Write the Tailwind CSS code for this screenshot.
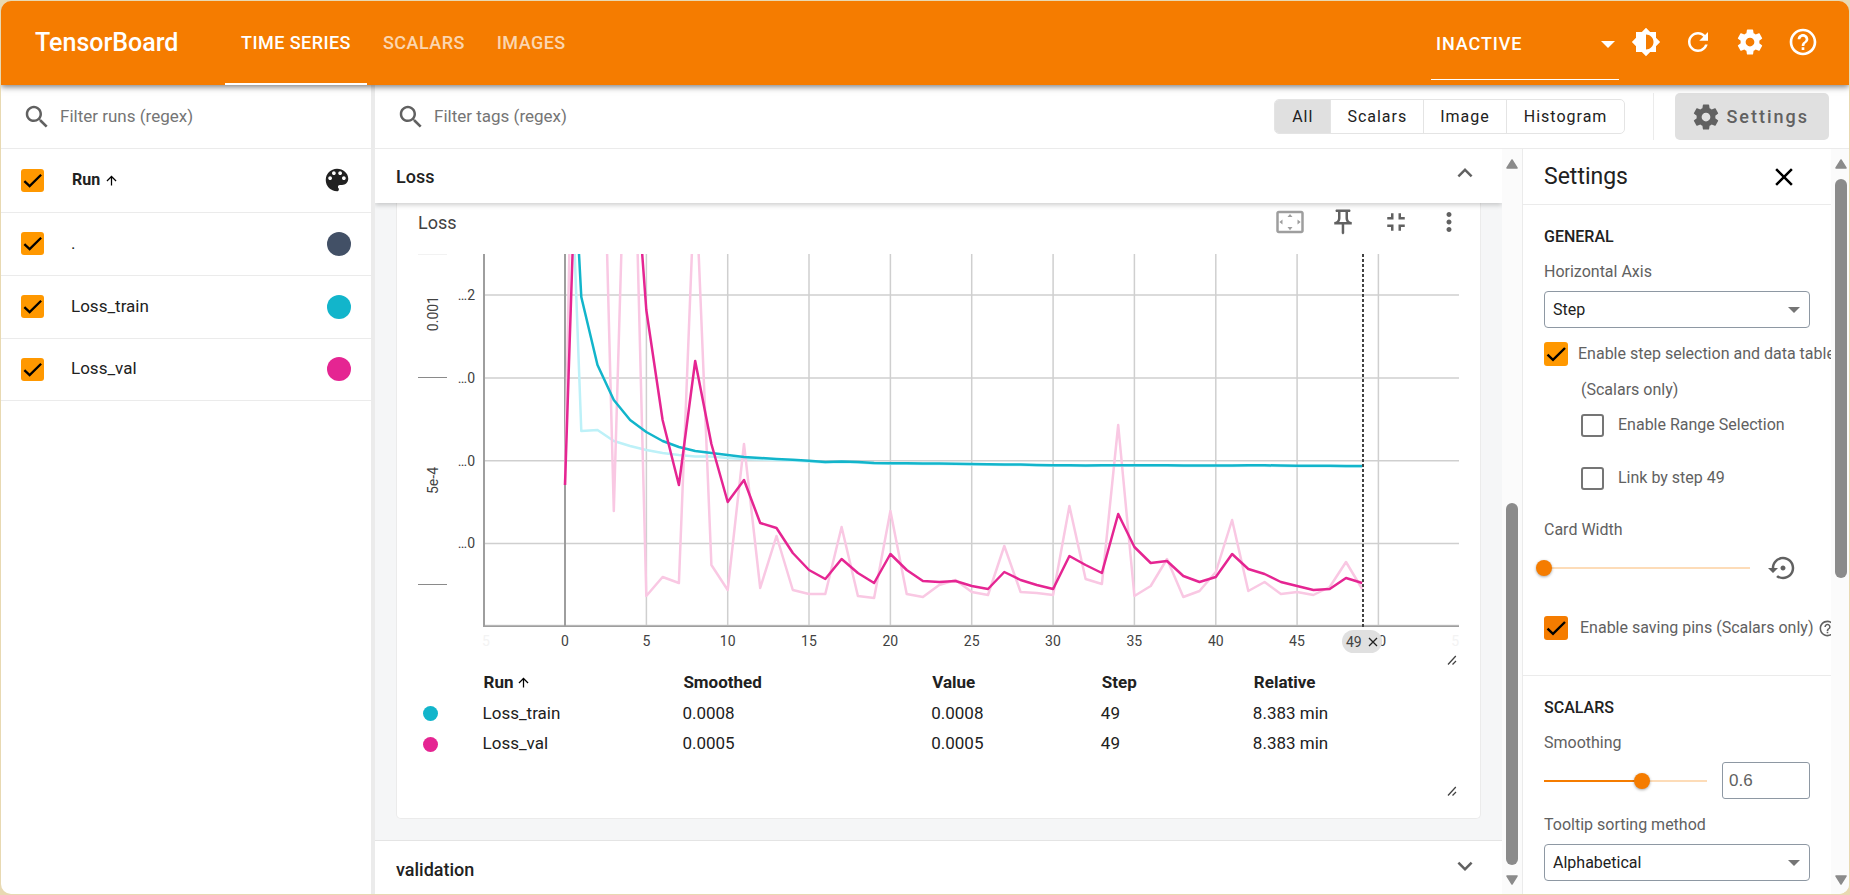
<!DOCTYPE html>
<html lang="en">
<head>
<meta charset="utf-8">
<title>TensorBoard</title>
<script src="https://cdn.jsdelivr.net/npm/@tailwindcss/browser@4"></script>
</head>
<body class="bg-[#e8d9b2] font-[Roboto,sans-serif] text-[#212121]">

<svg class="hidden" aria-hidden="true">
  <symbol id="search" viewBox="0 0 24 24"><path d="M15.5 14h-.79l-.28-.27C15.41 12.59 16 11.11 16 9.5 16 5.91 13.09 3 9.5 3S3 5.91 3 9.5 5.91 16 9.5 16c1.61 0 3.09-.59 4.23-1.57l.27.28v.79l5 4.99L20.49 19l-4.99-5zm-6 0C7.01 14 5 11.99 5 9.5S7.01 5 9.5 5 14 7.01 14 9.5 11.99 14 9.5 14z"/></symbol>
  <symbol id="gear" viewBox="0 0 24 24"><path d="M19.43 12.98c.04-.32.07-.64.07-.98s-.03-.66-.07-.98l2.11-1.65c.19-.15.24-.42.12-.64l-2-3.46c-.12-.22-.39-.3-.61-.22l-2.49 1c-.52-.4-1.08-.73-1.69-.98l-.38-2.65C14.46 2.18 14.25 2 14 2h-4c-.25 0-.46.18-.49.42l-.38 2.65c-.61.25-1.17.59-1.69.98l-2.49-1c-.23-.09-.49 0-.61.22l-2 3.46c-.13.22-.07.49.12.64l2.11 1.65c-.04.32-.07.65-.07.98s.03.66.07.98l-2.11 1.65c-.19.15-.24.42-.12.64l2 3.46c.12.22.39.3.61.22l2.49-1c.52.4 1.08.73 1.69.98l.38 2.65c.03.24.24.42.49.42h4c.25 0 .46-.18.49-.42l.38-2.65c.61-.25 1.17-.59 1.69-.98l2.49 1c.23.09.49 0 .61-.22l2-3.46c.12-.22.07-.49-.12-.64l-2.11-1.65zM12 15.5c-1.93 0-3.5-1.57-3.5-3.5s1.57-3.5 3.5-3.5 3.5 1.57 3.5 3.5-1.57 3.5-3.5 3.5z"/></symbol>
  <symbol id="help" viewBox="0 0 24 24"><path d="M11 18h2v-2h-2v2zm1-16C6.48 2 2 6.48 2 12s4.48 10 10 10 10-4.48 10-10S17.52 2 12 2zm0 18c-4.41 0-8-3.59-8-8s3.59-8 8-8 8 3.59 8 8-3.59 8-8 8zm0-14c-2.21 0-4 1.79-4 4h2c0-1.1.9-2 2-2s2 .9 2 2c0 2-3 1.75-3 5h2c0-2.25 3-2.5 3-5 0-2.21-1.79-4-4-4z"/></symbol>
  <symbol id="check" viewBox="0 0 24 24"><path d="M3.5 12.7 9 17.9 21 6" fill="none" stroke="#000" stroke-width="2.4"/></symbol>
  <symbol id="arrow-up" viewBox="0 0 24 24"><path d="M4 12l1.41 1.41L11 7.83V20h2V7.83l5.58 5.59L20 12l-8-8-8 8z"/></symbol>
  <symbol id="resize" viewBox="0 0 10 10"><path d="M1 9.500 8.800 1M5.500 9.500 9 6" fill="none" stroke="#424242" stroke-width="1.300"/></symbol>
</svg>

<div class="flex h-screen flex-col p-px">
<div class="flex min-h-0 flex-1 flex-col overflow-hidden rounded-[10px] bg-white">

  <header class="relative z-20 flex h-[84px] shrink-0 items-center bg-[#f57c00] text-white shadow-[0_2px_6px_rgba(0,0,0,0.5)]">
    <h1 class="w-[224px] pl-[34px] text-[25px] leading-8 font-medium">TensorBoard</h1>
    <nav class="flex h-full text-[18px] font-medium tracking-wide">
      <a href="#" class="flex items-center border-b-2 border-white px-4">TIME SERIES</a>
      <a href="#" class="flex items-center border-b-2 border-transparent px-4 text-white/70">SCALARS</a>
      <a href="#" class="flex items-center border-b-2 border-transparent px-4 text-white/70">IMAGES</a>
    </nav>
    <div class="ml-auto flex h-full items-center pr-[30px]">
      <div class="relative mr-3 h-[79px] w-[188px] self-start border-b border-white">
        <select aria-label="Inactive dashboards" class="h-full w-full appearance-none pt-[7px] pl-[5px] text-[18px] font-medium tracking-wider text-white outline-none"><option>INACTIVE</option></select>
        <svg class="pointer-events-none absolute top-[40px] right-1 h-[7px] w-[14px] fill-white" viewBox="0 0 14 7"><path d="M0 0h14L7 7z"/></svg>
      </div>
      <div class="flex gap-[22px] pb-[3px]">
        <button aria-label="Toggle dark mode"><svg class="size-[30px] fill-white" viewBox="0 0 24 24"><path d="M20 15.310L23.310 12 20 8.690V4h-4.690L12 .69 8.690 4H4v4.690L.69 12 4 15.310V20h4.690L12 23.310 15.310 20H20v-4.690zM12 18V6c3.310 0 6 2.690 6 6s-2.690 6-6 6z"/></svg></button>
        <button aria-label="Reload"><svg class="size-[30px] fill-white" viewBox="0 0 24 24"><path d="M17.65 6.35C16.2 4.9 14.21 4 12 4c-4.42 0-7.99 3.58-7.99 8s3.57 8 7.99 8c3.73 0 6.84-2.55 7.73-6h-2.08c-.82 2.33-3.04 4-5.65 4-3.31 0-6-2.69-6-6s2.69-6 6-6c1.66 0 3.14.69 4.22 1.78L13 11h7V4l-2.35 2.35z"/></svg></button>
        <button aria-label="Open settings"><svg class="size-[30px] fill-white"><use href="#gear"/></svg></button>
        <a href="#" aria-label="Help"><svg class="mt-px size-[32px] fill-white"><use href="#help"/></svg></a>
      </div>
    </div>
  </header>

  <div class="flex min-h-0 flex-1">

    <!-- Runs -->
    <aside class="flex w-[374px] shrink-0 flex-col border-r-4 border-[#ebebeb]">
      <label class="flex h-16 items-center gap-2 border-b border-[#ebebeb] pl-[21px]">
        <svg class="size-[30px] shrink-0 fill-[#616161]"><use href="#search"/></svg>
        <input type="text" placeholder="Filter runs (regex)" aria-label="Filter runs" class="w-full text-[17px] outline-none placeholder:text-[#757575]">
      </label>
      <table class="w-full text-left text-[17px]">
        <thead>
          <tr class="h-[63px] border-b border-[#ebebeb]">
            <th class="w-[70px] pl-5"><span class="relative block size-[23px]"><input type="checkbox" checked aria-label="Select all runs" class="block size-full appearance-none rounded-[3px] bg-[#ff9800]"><svg class="pointer-events-none absolute inset-0 size-full"><use href="#check"/></svg></span></th>
            <th class="text-[16px] font-bold"><span class="flex items-center gap-1 pl-px">Run <svg class="size-[15px]"><use href="#arrow-up"/></svg></span></th>
            <th class="w-[49px]"><button aria-label="Color runs by" class="block"><svg class="size-[30px] fill-[#212121]" viewBox="0 0 24 24"><path d="M12 3c-4.970 0-9 4.030-9 9s4.030 9 9 9c.83 0 1.500-.67 1.500-1.500 0-.39-.15-.74-.39-1.010-.23-.26-.38-.61-.38-.99 0-.83.67-1.500 1.500-1.500H16c2.760 0 5-2.240 5-5 0-4.420-4.030-8-9-8zm-5.500 9c-.83 0-1.500-.67-1.500-1.500S5.670 9 6.500 9 8 9.670 8 10.500 7.330 12 6.500 12zm3-4C8.670 8 8 7.330 8 6.500S8.670 5 9.500 5s1.500.67 1.500 1.500S10.330 8 9.500 8zm5 0c-.83 0-1.500-.67-1.500-1.500S13.670 5 14.500 5s1.500.67 1.500 1.500S15.330 8 14.500 8zm3 4c-.83 0-1.500-.67-1.500-1.500S16.670 9 17.500 9s1.500.67 1.500 1.500-.67 1.500-1.500 1.500z"/></svg></button></th>
          </tr>
        </thead>
        <tbody>
          <tr class="h-[63px] border-b border-[#ebebeb]">
            <td class="pl-5"><span class="relative block size-[23px]"><input type="checkbox" checked aria-label="." class="block size-full appearance-none rounded-[3px] bg-[#ff9800]"><svg class="pointer-events-none absolute inset-0 size-full"><use href="#check"/></svg></span></td>
            <td>.</td>
            <td class="pl-[5px]"><button aria-label="Change color of ." class="block size-6 rounded-full bg-[#425066]"></button></td>
          </tr>
          <tr class="h-[63px] border-b border-[#ebebeb]">
            <td class="pl-5"><span class="relative block size-[23px]"><input type="checkbox" checked aria-label="Loss_train" class="block size-full appearance-none rounded-[3px] bg-[#ff9800]"><svg class="pointer-events-none absolute inset-0 size-full"><use href="#check"/></svg></span></td>
            <td>Loss_train</td>
            <td class="pl-[5px]"><button aria-label="Change color of Loss_train" class="block size-6 rounded-full bg-[#12b5cb]"></button></td>
          </tr>
          <tr class="h-[62px] border-b border-[#ebebeb]">
            <td class="pl-5"><span class="relative block size-[23px]"><input type="checkbox" checked aria-label="Loss_val" class="block size-full appearance-none rounded-[3px] bg-[#ff9800]"><svg class="pointer-events-none absolute inset-0 size-full"><use href="#check"/></svg></span></td>
            <td>Loss_val</td>
            <td class="pl-[5px]"><button aria-label="Change color of Loss_val" class="block size-6 rounded-full bg-[#e52592]"></button></td>
          </tr>
        </tbody>
      </table>
    </aside>

    <div class="flex min-w-0 flex-1 flex-col">
      <!-- Toolbar -->
      <div class="flex h-16 shrink-0 items-center border-b border-[#ebebeb] pr-5">
        <label class="flex flex-1 items-center gap-2 pl-[21px]">
          <svg class="size-[30px] shrink-0 fill-[#616161]"><use href="#search"/></svg>
          <input type="text" placeholder="Filter tags (regex)" aria-label="Filter tags" class="w-full text-[17px] outline-none placeholder:text-[#757575]">
        </label>
        <div class="flex h-[35px] overflow-hidden rounded-[5px] border border-[#e4e4e4] text-[16px] tracking-[1px] text-[#212121]">
          <button class="bg-[#e0e0e0] px-[17px]">All</button>
          <button class="border-l border-[#e4e4e4] px-4">Scalars</button>
          <button class="border-l border-[#e4e4e4] px-4">Image</button>
          <button class="border-l border-[#e4e4e4] px-[17px]">Histogram</button>
        </div>
        <div class="ml-7 h-[47px] w-px bg-[#ebebeb]"></div>
        <button class="ml-[21px] flex h-[47px] items-center gap-[5px] rounded-[5px] bg-[#e0e0e0] pr-5 pl-4 text-[18px] font-medium tracking-[2px] text-[#616161]"><svg class="size-[30px] fill-[#616161]"><use href="#gear"/></svg>Settings</button>
      </div>

      <div class="flex min-h-0 flex-1">
        <!-- Cards -->
        <main class="flex min-w-0 flex-1 flex-col overflow-hidden bg-[#f5f6f7]">
          <div class="relative z-10 flex h-[54px] shrink-0 items-center justify-between bg-white pr-[22px] pl-[21px] shadow-[0_2px_5px_rgba(0,0,0,0.2)]">
            <h2 class="text-[18px] font-medium">Loss</h2>
            <button aria-label="Collapse Loss" class="pb-[7px]"><svg class="size-[30px] fill-[#616161]" viewBox="0 0 24 24"><path d="M12 8l-6 6 1.410 1.410L12 10.830l4.590 4.580L18 14z"/></svg></button>
          </div>

          <section class="mx-[21px] shrink-0 rounded-b-[5px] border border-t-0 border-[#ebebeb] bg-white px-[21px] pb-[22px]">
            <div class="flex h-[38px] items-center">
              <h3 class="flex-1 text-[18px] text-[#424242]">Loss</h3>
              <div class="-mr-[5px] flex gap-[23px]">
                <button aria-label="Fit domain to data"><svg class="size-[30px] fill-[#9e9e9e]" viewBox="0 0 24 24"><path d="M12.010 5.500L10 8h4l-1.990-2.500zM18 10v4l2.500-1.990L18 10zM6 10l-2.500 2.010L6 14v-4zm8 6h-4l2.010 2.500L14 16zm7-13H3c-1.100 0-2 .9-2 2v14c0 1.100.9 2 2 2h18c1.100 0 2-.9 2-2V5c0-1.100-.9-2-2-2zm0 16.010H3V4.990h18v14.020z"/></svg></button>
                <button aria-label="Pin card"><svg class="size-[30px] fill-[#616161]" viewBox="0 0 24 24"><path d="M14 4v5c0 1.120.37 2.160 1 3H9c.65-.86 1-1.900 1-3V4h4m3-2H7c-.55 0-1 .45-1 1s.45 1 1 1h1v5c0 1.660-1.340 3-3 3v2h5.970v7l1 1 1-1v-7H19v-2c-1.660 0-3-1.340-3-3V4h1c.55 0 1-.45 1-1s-.45-1-1-1z"/></svg></button>
                <button aria-label="Toggle full size"><svg class="size-[30px] fill-[#616161]" viewBox="0 0 24 24"><path d="M5 16h3v3h2v-5H5v2zm3-8H5v2h5V5H8v3zm6 11h2v-3h3v-2h-5v5zm2-11V5h-2v5h5V8h-3z"/></svg></button>
                <button aria-label="More options"><svg class="size-[30px] fill-[#616161]" viewBox="0 0 24 24"><path d="M12 8c1.100 0 2-.9 2-2s-.9-2-2-2-2 .9-2 2 .9 2 2 2zm0 2c-1.100 0-2 .9-2 2s.9 2 2 2 2-.9 2-2-.9-2-2-2zm0 6c-1.100 0-2 .9-2 2s.9 2 2 2 2-.9 2-2-.9-2-2-2z"/></svg></button>
              </div>
            </div>

            <!-- Chart: y axis, plot, x axis -->
            <div class="mt-[13px] flex h-[373px] text-[14px] text-[#424242]">
              <div class="flex w-[29px] flex-col">
                <div class="flex h-[124px] items-center justify-center border-y border-t-[#f2f2f2] border-b-[#8a8a8a]"><span class="rotate-180 pt-1 pr-[2px] [writing-mode:vertical-rl]">0.001</span></div>
                <div class="flex h-[207px] items-center justify-center border-b border-[#8a8a8a]"><span class="rotate-180 pr-[2px] [writing-mode:vertical-rl]">5e-4</span></div>
              </div>
              <div class="relative w-[36px]">
                <span class="absolute right-2 -translate-y-1/2" style="top:11.0%">…2</span>
                <span class="absolute right-2 -translate-y-1/2" style="top:33.2%">…0</span>
                <span class="absolute right-2 -translate-y-1/2" style="top:55.4%">…0</span>
                <span class="absolute right-2 -translate-y-1/2" style="top:77.6%">…0</span>
              </div>
              <svg class="h-full min-w-0 flex-1" viewBox="0 0 976 373" preserveAspectRatio="none" role="img" aria-label="Loss by step">
                <g id="grid" stroke="#cfcfcf" stroke-width="1.500" fill="none">
                  <path vector-effect="non-scaling-stroke" d="M0 41H976M0 124H976M0 206.700H976M0 289.400H976M0 371.500H976"/>
                  <path vector-effect="non-scaling-stroke" d="M163.400 0V373M244.700 0V373M326 0V373M407.400 0V373M488.700 0V373M570.100 0V373M651.400 0V373M732.800 0V373M814.100 0V373M895.400 0V373"/>
                  <path vector-effect="non-scaling-stroke" stroke="#9e9e9e" stroke-width="2" d="M82 0V373M1 0V373M0 372.500H976"/>
                </g>
                <g fill="none" stroke-width="2.500" stroke-linejoin="round">
                  <polyline id="train-raw" vector-effect="non-scaling-stroke" stroke="#bdf1f8"/>
                  <polyline id="val-raw" vector-effect="non-scaling-stroke" stroke="#f9c8e3"/>
                  <polyline id="train" vector-effect="non-scaling-stroke" stroke="#12b5cb"/>
                  <polyline id="val" vector-effect="non-scaling-stroke" stroke="#e52592"/>
                </g>
                <path vector-effect="non-scaling-stroke" d="M880 0V373" stroke="#424242" stroke-width="2" stroke-dasharray="3 2"/>
              </svg>
            </div>
            <div class="relative ml-[65px] h-[28px] text-[14px] leading-[28px] text-[#424242]">
              <span class="absolute -translate-x-1/2 text-[#f3f3f3]" style="left:0.3%">5</span>
              <span class="absolute -translate-x-1/2" style="left:8.4%">0</span>
              <span class="absolute -translate-x-1/2" style="left:16.74%">5</span>
              <span class="absolute -translate-x-1/2" style="left:25.07%">10</span>
              <span class="absolute -translate-x-1/2" style="left:33.4%">15</span>
              <span class="absolute -translate-x-1/2" style="left:41.74%">20</span>
              <span class="absolute -translate-x-1/2" style="left:50.07%">25</span>
              <span class="absolute -translate-x-1/2" style="left:58.4%">30</span>
              <span class="absolute -translate-x-1/2" style="left:66.74%">35</span>
              <span class="absolute -translate-x-1/2" style="left:75.08%">40</span>
              <span class="absolute -translate-x-1/2" style="left:83.4%">45</span>
              <span class="absolute -translate-x-1/2" style="left:91.74%">50</span>
              <span class="absolute -translate-x-1/2 text-[#f3f3f3]" style="left:99.6%">5</span>
              <span class="absolute top-[3px] flex h-[23px] w-10 -translate-x-1/2 items-center justify-center gap-[6px] rounded-full bg-[#e0e0e0]" style="left:90.05%">49<button aria-label="Remove step"><svg class="block size-[10px]" viewBox="0 0 10 10"><path d="M1 1l8 8M9 1L1 9" stroke="#212121" stroke-width="1.300"/></svg></button></span>
            </div>
            <div class="flex h-[12px] justify-end pr-[2px]"><svg class="size-[10px]"><use href="#resize"/></svg></div>

            <table class="w-full table-fixed text-left text-[17px]">
              <colgroup><col style="width:6.2%"><col style="width:19.2%"><col style="width:23.9%"><col style="width:16.3%"><col style="width:14.6%"><col></colgroup>
              <thead>
                <tr class="h-[31px]">
                  <td></td>
                  <th class="pl-px font-bold"><span class="flex items-center gap-[3px]">Run <svg class="size-[15px]"><use href="#arrow-up"/></svg></span></th>
                  <th class="pl-px font-bold">Smoothed</th><th class="pl-px font-bold">Value</th><th class="pl-px font-bold">Step</th><th class="pl-px font-bold">Relative</th>
                </tr>
              </thead>
              <tbody>
                <tr class="h-[31px]"><td class="pl-[5px]"><span class="block size-[15px] rounded-full bg-[#12b5cb]"></span></td><td>Loss_train</td><td>0.0008</td><td>0.0008</td><td>49</td><td>8.383 min</td></tr>
                <tr class="h-[30px]"><td class="pl-[5px]"><span class="block size-[15px] rounded-full bg-[#e52592]"></span></td><td>Loss_val</td><td>0.0005</td><td>0.0005</td><td>49</td><td>8.383 min</td></tr>
              </tbody>
            </table>
            <div class="flex h-[37px] items-end justify-end pr-[2px]"><svg class="size-[10px]"><use href="#resize"/></svg></div>
          </section>

          <div class="mt-[21px] flex flex-1 items-center justify-between border-t border-[#e4e4e4] bg-white pt-1 pr-[22px] pl-[21px]">
            <h2 class="text-[18px] font-medium">validation</h2>
            <button aria-label="Expand validation" class="pb-[7px]"><svg class="size-[30px] fill-[#616161]" viewBox="0 0 24 24"><path d="M16.590 8.590L12 13.170 7.410 8.590 6 10l6 6 6-6z"/></svg></button>
          </div>
        </main>

        <div class="flex w-5 shrink-0 flex-col items-center bg-[#fbfbfb] pt-[10px] pb-[9px]" aria-hidden="true">
          <svg class="h-[10px] w-3" viewBox="0 0 12 10"><path d="M6 1 11 9H1z" fill="#8b8b8b" stroke="#8b8b8b" stroke-width="1.500" stroke-linejoin="round"/></svg>
          <div class="basis-[334px]"></div>
          <div class="w-3 flex-1 rounded-full bg-[#8b8b8b]"></div>
          <svg class="mt-[10px] h-[10px] w-3" viewBox="0 0 12 10"><path d="M6 9 11 1H1z" fill="#8b8b8b" stroke="#8b8b8b" stroke-width="1.500" stroke-linejoin="round"/></svg>
        </div>

        <!-- Settings -->
        <aside class="flex w-[327px] shrink-0 border-l border-[#ebebeb]">
          <div class="min-w-0 flex-1 overflow-hidden text-[16px] leading-5 whitespace-nowrap text-[#616161]">
            <div class="flex h-14 items-center justify-between border-b border-[#ebebeb] pr-8 pl-[21px] text-[#212121]">
              <h2 class="text-[23px] leading-7">Settings</h2>
              <button aria-label="Close settings"><svg class="size-[30px]" viewBox="0 0 24 24"><path d="M19 6.410L17.590 5 12 10.590 6.410 5 5 6.410 10.590 12 5 17.590 6.410 19 12 13.410 17.590 19 19 17.590 13.410 12z"/></svg></button>
            </div>

            <section class="border-b border-[#ebebeb] px-[21px] pt-[22px] pb-[35px]">
              <h3 class="font-medium text-[#212121]">GENERAL</h3>
              <label for="axis" class="mt-[15px] block">Horizontal Axis</label>
              <div class="relative mt-[9px]">
                <select id="axis" class="h-[37px] w-full appearance-none rounded-[4px] border border-[#8e98a3] pl-2 text-[16px] text-[#212121]"><option>Step</option><option>Relative</option><option>Wall</option></select>
                <svg class="pointer-events-none absolute top-4 right-[10px] h-[6px] w-3 fill-[#757575]" viewBox="0 0 12 6"><path d="M0 0h12L6 6z"/></svg>
              </div>
              <div class="mt-[14px] flex h-6 items-center gap-[10px]">
                <span class="relative block size-6 shrink-0"><input id="stepsel" type="checkbox" checked class="block size-full appearance-none rounded-[3px] bg-[#ff9800]"><svg class="pointer-events-none absolute inset-0 size-full"><use href="#check"/></svg></span>
                <label for="stepsel">Enable step selection and data table</label>
              </div>
              <p class="mt-[14px] pl-[37px]">(Scalars only)</p>
              <div class="mt-[13px] flex h-6 items-center gap-[14px] pl-[37px]">
                <input id="range" type="checkbox" class="size-[23px] appearance-none rounded-[3px] border-2 border-[#757575]"><label for="range">Enable Range Selection</label>
              </div>
              <div class="mt-[29px] flex h-6 items-center gap-[14px] pl-[37px]">
                <input id="link" type="checkbox" class="size-[23px] appearance-none rounded-[3px] border-2 border-[#757575]"><label for="link">Link by step 49</label>
              </div>
              <label for="cardwidth" class="mt-[30px] block">Card Width</label>
              <div class="mt-[13px] flex h-[30px] items-center">
                <input id="cardwidth" type="range" min="0" max="100" value="0" class="-ml-2 h-4 min-w-0 flex-1 appearance-none bg-[linear-gradient(#fddcb8,#fddcb8)] bg-[length:calc(100%-16px)_2px] bg-center bg-no-repeat [&::-webkit-slider-thumb]:size-4 [&::-webkit-slider-thumb]:appearance-none [&::-webkit-slider-thumb]:rounded-full [&::-webkit-slider-thumb]:bg-[#f57c00] [&::-webkit-slider-thumb]:shadow-[0_1px_3px_rgba(0,0,0,0.35)]">
                <button aria-label="Reset card width" class="mr-3 ml-[10px]"><svg class="size-[30px] fill-[#616161]" viewBox="0 0 24 24"><path d="M14 12c0-1.100-.9-2-2-2s-2 .9-2 2 .9 2 2 2 2-.9 2-2zm-2-9c-4.970 0-9 4.030-9 9H0l4 4 4-4H5c0-3.870 3.130-7 7-7s7 3.130 7 7-3.130 7-7 7c-1.510 0-2.910-.49-4.060-1.300l-1.420 1.440C8.040 20.300 9.940 21 12 21c4.970 0 9-4.030 9-9s-4.030-9-9-9z"/></svg></button>
              </div>
              <div class="mt-[33px] flex h-6 items-center gap-3">
                <span class="relative block size-6 shrink-0"><input id="pins" type="checkbox" checked class="block size-full appearance-none rounded-[3px] bg-[#f57c00]"><svg class="pointer-events-none absolute inset-0 size-full"><use href="#check"/></svg></span>
                <label for="pins">Enable saving pins (Scalars only)</label>
                <svg class="-ml-[7px] size-[19px] shrink-0 fill-[#616161]"><use href="#help"/></svg>
              </div>
            </section>

            <section class="px-[21px] pt-[22px]">
              <h3 class="font-medium text-[#212121]">SCALARS</h3>
              <label for="smooth" class="mt-[15px] block">Smoothing</label>
              <div class="mt-[9px] flex h-[37px] items-center">
                <input id="smooth" type="range" min="0" max="1" step="0.1" value="0.6" class="-ml-2 h-4 min-w-0 flex-1 appearance-none bg-[linear-gradient(to_right,#f57c00_60%,#fddcb8_60%)] bg-[length:calc(100%-16px)_2px] bg-center bg-no-repeat [&::-webkit-slider-thumb]:size-4 [&::-webkit-slider-thumb]:appearance-none [&::-webkit-slider-thumb]:rounded-full [&::-webkit-slider-thumb]:bg-[#f57c00] [&::-webkit-slider-thumb]:shadow-[0_1px_3px_rgba(0,0,0,0.35)]">
                <input type="text" value="0.6" aria-label="Smoothing value" class="ml-[7px] h-[37px] w-[88px] rounded-[3px] border border-[#8e98a3] pl-[6px] font-['Liberation_Sans',sans-serif] text-[17px] text-[#616161]">
              </div>
              <label for="tooltip" class="mt-4 block">Tooltip sorting method</label>
              <div class="relative mt-[9px]">
                <select id="tooltip" class="h-[37px] w-full appearance-none rounded-[4px] border border-[#8e98a3] pl-2 text-[16px] text-[#212121]"><option>Alphabetical</option><option>Ascending</option><option>Descending</option></select>
                <svg class="pointer-events-none absolute top-4 right-[10px] h-[6px] w-3 fill-[#757575]" viewBox="0 0 12 6"><path d="M0 0h12L6 6z"/></svg>
              </div>
            </section>
          </div>
          <div class="flex w-[18px] shrink-0 flex-col items-center bg-[#fbfbfb] pt-[10px] pb-[9px] pl-[2px]" aria-hidden="true">
            <svg class="h-[10px] w-3" viewBox="0 0 12 10"><path d="M6 1 11 9H1z" fill="#8b8b8b" stroke="#8b8b8b" stroke-width="1.500" stroke-linejoin="round"/></svg>
            <div class="mt-[10px] w-3 basis-[399px] rounded-full bg-[#8b8b8b]"></div>
            <svg class="mt-auto h-[10px] w-3" viewBox="0 0 12 10"><path d="M6 9 11 1H1z" fill="#8b8b8b" stroke="#8b8b8b" stroke-width="1.500" stroke-linejoin="round"/></svg>
          </div>
        </aside>
      </div>
    </div>
  </div>
</div>
</div>

<script>
  // Vertical plot positions, one entry per training step.
  const trainTail = [208,207.5,208,209,209.300,209.300,209.500,209.500,209.700,210,210.200,210.400,210.600,211,211.200,211.200,211.400,211.200,211.200,211.200,211.200,211.200,211.400,211.400,211.400,211.400,211.200,211.300,211.500,211.700,211.800,211.700,212,212];
  const series = {
    'train-raw': [-261,177,176,187,192,196,199,201,202.500,202.500,204,205,205.500,206,206.600,207.500,...trainTail.map(v => v + .5)],
    'train': [-261,43,111,146,166,178,187,193,197,199,201,203,204,205,205.700,206.700,...trainTail],
    'val-raw': [231,-643,-370,257,-300,342,323,329,-85,311,336,190,334,282,336,340,340,273,342,344,257,340,343,331,326,338,341,292,338,339,341,252,325,330,171,342,332,305,343,337,318,266,337,328,340,338,341,333,308,335],
    'val': [231,-268,-450,-450,-165,56,166,231,107,190,248,226,269,274,299,316,325,305,319,329,300,316,327,328,327,332,335,318,326,331,335,302,311,319,260,293,309,307,322,328,323,300,315,320,328,332,336,335,324,329]
  };
  for (const id in series)
    document.getElementById(id).setAttribute('points', series[id].map((y, i) => (82 + i * 16.27).toFixed(1) + ',' + y).join(' '));
</script>
</body>
</html>
